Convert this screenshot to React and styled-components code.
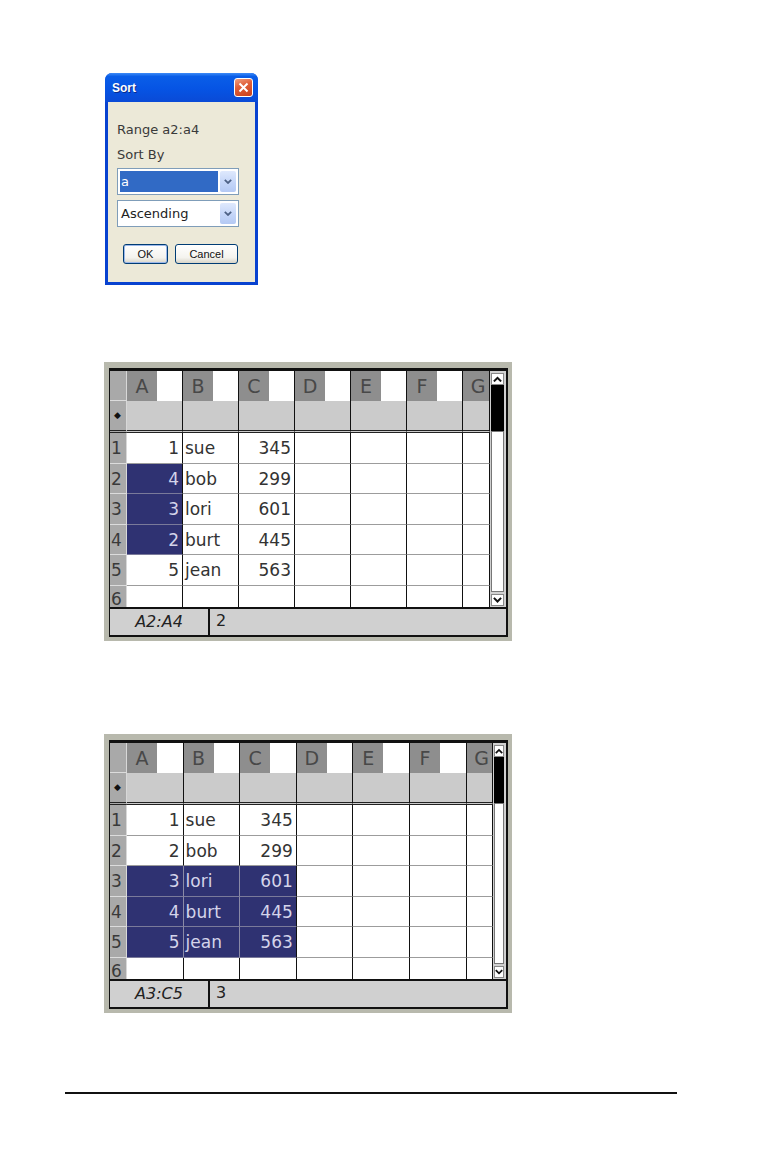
import React from "react";
import styled, { createGlobalStyle } from "styled-components";

const GlobalStyle = createGlobalStyle`
  html, body {
    margin: 0;
    padding: 0;
    background: #fff;
  }
  body {
    font-family: "DejaVu Sans", sans-serif;
  }
`;

const COLS = ["A", "B", "C", "D", "E", "F", "G"];

const sheet1 = [
  [1, "sue", 345],
  [4, "bob", 299],
  [3, "lori", 601],
  [2, "burt", 445],
  [5, "jean", 563],
];

const sheet2 = [
  [1, "sue", 345],
  [2, "bob", 299],
  [3, "lori", 601],
  [4, "burt", 445],
  [5, "jean", 563],
];

function Chevron({ up, color = "#111", size = 9 }) {
  return (
    <svg width={size} height={size * 0.7} viewBox="0 0 10 7">
      <path
        d={up ? "M1 6 L5 2 L9 6" : "M1 1 L5 5 L9 1"}
        fill="none"
        stroke={color}
        strokeWidth="2.2"
        strokeLinejoin="miter"
      />
    </svg>
  );
}

function SortDialog() {
  return (
    <Window>
      <TitleBar>
        <TitleText>Sort</TitleText>
        <CloseButton>
          <svg width="11" height="11" viewBox="0 0 11 11">
            <path d="M1.5 1.5 L9.5 9.5 M9.5 1.5 L1.5 9.5" stroke="#fff" strokeWidth="2" />
          </svg>
        </CloseButton>
      </TitleBar>
      <DialogBody>
        <Label>Range a2:a4</Label>
        <Label>Sort By</Label>
        <Select>
          <SelectValue $active>a</SelectValue>
          <DropButton>
            <Chevron color="#4d6185" size={8} />
          </DropButton>
        </Select>
        <Select>
          <SelectValue>Ascending</SelectValue>
          <DropButton>
            <Chevron color="#4d6185" size={8} />
          </DropButton>
        </Select>
        <ButtonRow>
          <XPButton $w={45} $default>OK</XPButton>
          <XPButton $w={63}>Cancel</XPButton>
        </ButtonRow>
      </DialogBody>
    </Window>
  );
}

function Sheet({ data, isSelected, refText, value, colW, scrollW }) {
  const template = `17px repeat(6, ${colW}px) 1fr`;
  return (
    <Frame>
      <Inner>
        <Main>
          <Grid style={{ gridTemplateColumns: template }}>
            <RowNum $kind="head" />
            {COLS.map((c) => (
              <HeadCell key={c}>
                <HeadLabel>{c}</HeadLabel>
                <HeadName />
              </HeadCell>
            ))}

            <RowNum $kind="formula">
              <Diamond>◆</Diamond>
            </RowNum>
            {COLS.map((c) => (
              <FormulaCell key={c} />
            ))}

            {data.map((row, r) => (
              <React.Fragment key={r}>
                <RowNum>{r + 1}</RowNum>
                {COLS.map((c, ci) => {
                  const v = row[ci];
                  const sel = isSelected(r, ci);
                  const nextSel = isSelected(r, ci + 1);
                  return (
                    <DataCell
                      key={c}
                      $sel={sel}
                      $inner={sel && nextSel}
                      $num={typeof v === "number"}
                    >
                      {v}
                    </DataCell>
                  );
                })}
              </React.Fragment>
            ))}

            <RowNum $kind="last">6</RowNum>
            {COLS.map((c) => (
              <DataCell key={c} $last />
            ))}
          </Grid>
          <Scrollbar $w={scrollW}>
            <ScrollBtn>
              <Chevron up />
            </ScrollBtn>
            <Thumb />
            <Track />
            <ScrollBtn>
              <Chevron />
            </ScrollBtn>
          </Scrollbar>
        </Main>
        <Footer>
          <RefCell>{refText}</RefCell>
          <ValueCell>{value}</ValueCell>
        </Footer>
      </Inner>
    </Frame>
  );
}

export default function App() {
  return (
    <Page>
      <GlobalStyle />
      <DialogWrap>
        <SortDialog />
      </DialogWrap>
      <SheetWrap $top={77}>
        <Sheet
          data={sheet1}
          isSelected={(r, c) => c === 0 && r >= 1 && r <= 3}
          refText="A2:A4"
          value="2"
          colW={56}
          scrollW={16}
        />
      </SheetWrap>
      <SheetWrap $top={93}>
        <Sheet
          data={sheet2}
          isSelected={(r, c) => c <= 2 && r >= 2 && r <= 4}
          refText="A3:C5"
          value="3"
          colW={56.6}
          scrollW={13}
        />
      </SheetWrap>
      <FootRule />
    </Page>
  );
}

const Page = styled.div`
  width: 764px;
  height: 1160px;
  box-sizing: border-box;
  padding-top: 73px;
  overflow: hidden;
  background: #fff;
`;

const DialogWrap = styled.div`
  margin-left: 105px;
`;

const Window = styled.div`
  width: 153px;
  height: 212px;
  box-sizing: border-box;
  border-radius: 7px 7px 0 0;
  background: #0842d0;
  padding: 0 3px 3px 3px;
  display: flex;
  flex-direction: column;
`;

const TitleBar = styled.div`
  height: 29px;
  margin: 0 -3px;
  padding: 0 5px 0 7px;
  border-radius: 7px 7px 0 0;
  background: linear-gradient(180deg, #3d8bf7 0%, #0a5ee8 12%, #0654e4 55%, #0a4ad6 100%);
  display: flex;
  align-items: center;
  justify-content: space-between;
`;

const TitleText = styled.span`
  font-family: "Liberation Sans", Arial, sans-serif;
  font-weight: bold;
  font-size: 12px;
  color: #fff;
  text-shadow: 1px 1px 0 #0a2a8a;
`;

const CloseButton = styled.div`
  width: 19px;
  height: 19px;
  box-sizing: border-box;
  border: 1px solid #fff;
  border-radius: 3px;
  background: linear-gradient(160deg, #f0a080 0%, #e0603a 40%, #c8401c 100%);
  display: flex;
  align-items: center;
  justify-content: center;
`;

const DialogBody = styled.div`
  flex: 1;
  background: #ece9d8;
  padding: 18px 0 0 9px;
  display: flex;
  flex-direction: column;
`;

const Label = styled.div`
  font-family: "DejaVu Sans", sans-serif;
  font-size: 13px;
  color: #3a3a3a;
  height: 25px;
  line-height: 20px;
`;

const Select = styled.div`
  width: 122px;
  height: 27px;
  box-sizing: border-box;
  border: 1px solid #7f9db9;
  background: #fff;
  padding: 2px;
  display: flex;
  gap: 2px;
  margin-top: -2px;
  margin-bottom: 7px;
`;

const SelectValue = styled.div`
  flex: 1;
  font-family: "DejaVu Sans", sans-serif;
  font-size: 13px;
  line-height: 21px;
  padding-left: 1px;
  color: ${(p) => (p.$active ? "#fff" : "#222")};
  background: ${(p) => (p.$active ? "#316ac5" : "transparent")};
`;

const DropButton = styled.div`
  width: 16px;
  border-radius: 2px;
  background: linear-gradient(180deg, #dfe9fd 0%, #c2d4f8 60%, #b4c9f4 100%);
  display: flex;
  align-items: center;
  justify-content: center;
`;

const ButtonRow = styled.div`
  display: flex;
  gap: 7px;
  margin-top: 10px;
  padding-left: 6px;
`;

const XPButton = styled.div`
  width: ${(p) => p.$w}px;
  height: 20px;
  box-sizing: border-box;
  border: 1px solid #003c74;
  border-radius: 3px;
  background: linear-gradient(180deg, #ffffff 0%, #f4f3ee 70%, #d8d5c8 100%);
  box-shadow: ${(p) => (p.$default ? "inset 0 0 0 1px #9cb8ea" : "none")};
  font-family: "Liberation Sans", Arial, sans-serif;
  font-size: 11px;
  color: #111;
  display: flex;
  align-items: center;
  justify-content: center;
`;

const SheetWrap = styled.div`
  margin-left: 104px;
  margin-top: ${(p) => p.$top}px;
`;

const Frame = styled.div`
  width: 408px;
  box-sizing: border-box;
  background: #b8b9ad;
  padding: 6px 4px 4px 5px;
`;

const Inner = styled.div`
  border: 2px solid #111;
  border-top-width: 3px;
  border-left-width: 1px;
  background: #fff;
`;

const Main = styled.div`
  display: flex;
`;

const Grid = styled.div`
  flex: 1;
  display: grid;
  grid-template-rows: 30px 32px repeat(5, 30.5px) 21.5px;
  font-family: "DejaVu Sans", sans-serif;
  font-size: 17px;
  color: #333;
  overflow: hidden;
`;

const RowNum = styled.div`
  background: #a9a9a9;
  color: #3a3a3a;
  box-sizing: border-box;
  border-right: 1px solid #d8d8d8;
  border-bottom: ${(p) =>
    p.$kind === "formula" ? "3px double #222" : p.$kind === "last" ? "none" : "1px solid #dcdcdc"};
  padding-left: 1px;
  overflow: hidden;
  display: flex;
  align-items: ${(p) => (p.$kind === "formula" ? "center" : "flex-start")};
  line-height: ${(p) => (p.$kind === "last" ? "27px" : "31px")};
`;

const Diamond = styled.span`
  font-size: 9px;
  color: #111;
  padding-left: 3px;
`;

const HeadCell = styled.div`
  display: flex;
  background: #fff;
  border-right: 1px solid #111;
  overflow: hidden;
  &:last-child {
    border-right: none;
  }
`;

const HeadLabel = styled.div`
  width: 30px;
  flex-shrink: 0;
  background: #8e8e8e;
  color: #484848;
  font-size: 19px;
  text-align: center;
  line-height: 30px;
`;

const HeadName = styled.div`
  flex: 1;
  background: #fff;
`;

const FormulaCell = styled.div`
  background: #cbcbcb;
  box-sizing: border-box;
  border-right: 1px solid #111;
  border-bottom: 3px double #222;
`;

const DataCell = styled.div`
  box-sizing: border-box;
  border-right: 1px solid ${(p) => (p.$inner ? "#8a8aa6" : "#111")};
  border-bottom: ${(p) => (p.$last ? "none" : `1px solid ${p.$sel ? "#7a7a9a" : "#9c9c9c"}`)};
  background: ${(p) => (p.$sel ? "#2f3272" : "#fff")};
  color: ${(p) => (p.$sel ? "#d4d4ea" : "#333")};
  text-align: ${(p) => (p.$num ? "right" : "left")};
  padding: ${(p) => (p.$num ? "0 3px 0 0" : "0 0 0 2px")};
  line-height: 30px;
  white-space: nowrap;
  overflow: hidden;
`;

const Scrollbar = styled.div`
  width: ${(p) => p.$w}px;
  box-sizing: border-box;
  background: #d0d0d0;
  padding: 2px 2px 1px 1px;
  display: flex;
  flex-direction: column;
  align-items: stretch;
`;

const ScrollBtn = styled.div`
  height: 12px;
  background: #fff;
  border: 1px solid #888;
  box-sizing: border-box;
  display: flex;
  align-items: center;
  justify-content: center;
`;

const Thumb = styled.div`
  height: 46px;
  background: #000;
`;

const Track = styled.div`
  flex: 1;
  background: #fff;
  border: 1px solid #777;
  margin-bottom: 2px;
`;

const Footer = styled.div`
  height: 28px;
  box-sizing: border-box;
  border-top: 2px solid #111;
  background: #d0d0d0;
  display: flex;
`;

const RefCell = styled.div`
  width: 98px;
  flex-shrink: 0;
  border-right: 2px solid #111;
  text-align: center;
  font-family: "DejaVu Sans", sans-serif;
  font-style: italic;
  font-size: 16px;
  color: #222;
  line-height: 26px;
`;

const ValueCell = styled.div`
  flex: 1;
  padding-left: 6px;
  font-family: "DejaVu Sans", sans-serif;
  font-size: 16px;
  color: #222;
  line-height: 24px;
`;

const FootRule = styled.div`
  width: 612px;
  margin-left: 65px;
  margin-top: 79px;
  border-top: 2px solid #111;
`;
